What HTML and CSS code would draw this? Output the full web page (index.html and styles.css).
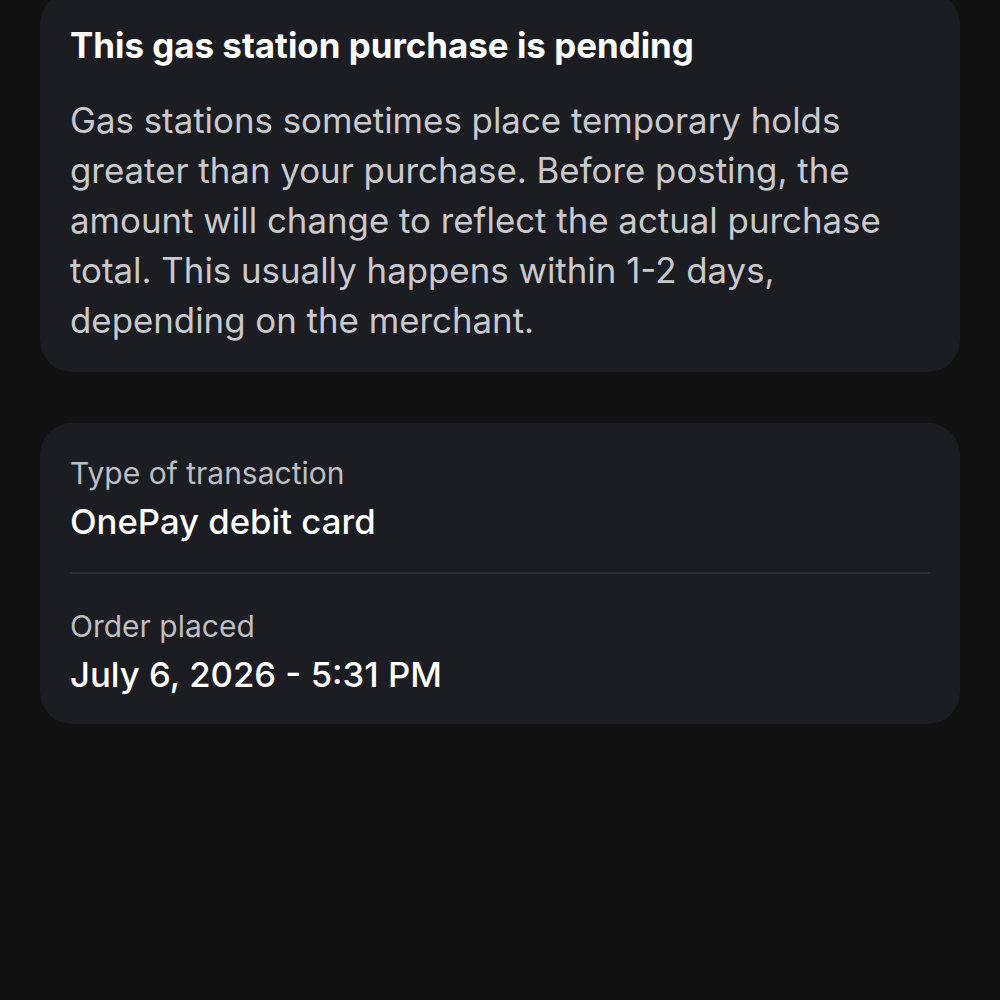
FILE: index.html
```html
<!DOCTYPE html>
<html>
<head>
<meta charset="utf-8">
<link rel="stylesheet" href="styles.css">
</head>
<body>
<main class="page">
  <section class="card notice">
    <h2 class="notice-title">This gas station purchase is pending</h2>
    <p class="notice-body">Gas stations sometimes place temporary holds greater than your purchase. Before posting, the amount will change to reflect the actual purchase total. This usually happens within 1-2 days, depending on the merchant.</p>
  </section>
  <section class="card details">
    <div class="row">
      <div class="label">Type of transaction</div>
      <div class="value">OnePay debit card</div>
    </div>
    <div class="divider"></div>
    <div class="row">
      <div class="label">Order placed</div>
      <div class="value">July 6, 2026 - 5:31 PM</div>
    </div>
  </section>
</main>
</body>
</html>
```

FILE: styles.css
```css
html, body {
  margin: 0;
  padding: 0;
  background: #121213;
  height: 100%;
}
body {
  font-family: Inter, "Noto Sans", sans-serif;
  color: #ffffff;
  overflow: hidden;
}
.page {
  display: flex;
  flex-direction: column;
  gap: 51px;
  padding: 0 40px;
  margin-top: -8px;
}
.card {
  background: #1c1d22;
  border-radius: 32px;
}
.notice {
  padding: 31px 30px 27px 30px;
}
.notice-title {
  margin: 0;
  font-size: 34.9px;
  font-weight: 700;
  line-height: 44px;
  color: #ffffff;
}
.notice-body {
  margin: 28px 0 0 0;
  font-size: 34.85px;
  line-height: 50px;
  color: #c9c9cd;
  font-weight: 400;
}
.details {
  padding: 30px 30px 28px 30px;
  display: flex;
  flex-direction: column;
}
.label {
  font-size: 30px;
  line-height: 40px;
  color: #bdbdc2;
}
.value {
  font-size: 34.7px;
  line-height: 44px;
  margin-top: 6px;
  font-weight: 500;
  color: #ffffff;
}
.divider {
  height: 2px;
  background: #2a2e38;
  margin: 29px 0 32px 0;
}
```
